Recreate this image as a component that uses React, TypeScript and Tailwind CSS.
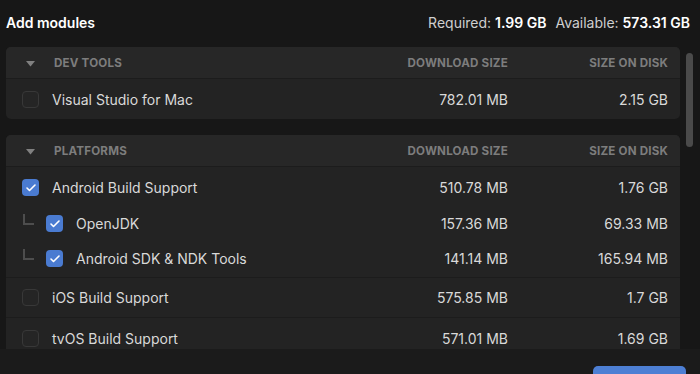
import { Check } from "lucide-react";

type Row = { name: string; dl: string; disk: string; checked?: boolean; child?: boolean; h: string };

const font = { fontFamily: "Inter, 'Noto Sans', sans-serif" };

function Checkbox({ checked }: { checked?: boolean }) {
    if (checked) {
        return (
            <div className="w-[17px] h-[17px] rounded-[4px] bg-[#4a7bd1] flex items-center justify-center shrink-0">
                <Check className="w-[12px] h-[12px] text-white" strokeWidth={3.2} />
            </div>
        );
    }
    return <div className="w-[17px] h-[17px] rounded-[4px] border border-[#383838] bg-[#252525] shrink-0" />;
}

function ModuleRow({ row, className }: { row: Row; className?: string }) {
    return (
        <div className={`flex items-center ${row.h} ${className ?? ""}`}>
            <div className="flex items-center flex-1 pl-[16px]">
                {row.child && (
                    <div className="w-[11px] h-[11px] border-l-2 border-b-2 border-[#4d4d4d] mr-[12px] mb-[8px] ml-[1px]" />
                )}
                <Checkbox checked={row.checked} />
                <span className="ml-[13px] text-[14px] text-[#d9d9d9]">{row.name}</span>
            </div>
            <div className="w-[120px] text-right text-[14px] text-[#d9d9d9]">{row.dl}</div>
            <div className="w-[172px] text-right pr-[12px] text-[14px] text-[#d9d9d9]">{row.disk}</div>
        </div>
    );
}

function PanelHeader({ title }: { title: string }) {
    return (
        <div className="flex items-center h-[32px] pt-[3px] bg-[#272727] border-b border-[#1c1c1c] text-[11.6px] font-bold tracking-[0.2px] text-[#7d7d7d]">
            <div className="flex items-center flex-1 pl-[20px]">
                <svg width="9" height="6" viewBox="0 0 9 6" className="mr-[19px]">
                    <path d="M0 0 H9 L4.5 5.5 Z" fill="#808080" />
                </svg>
                <span>{title}</span>
            </div>
            <div className="w-[120px] text-right">DOWNLOAD SIZE</div>
            <div className="w-[172px] text-right pr-[12px]">SIZE ON DISK</div>
        </div>
    );
}

export default function App() {
    const android: Row[] = [
        { name: "Android Build Support", dl: "510.78 MB", disk: "1.76 GB", checked: true, h: "h-[37px]" },
        { name: "OpenJDK", dl: "157.36 MB", disk: "69.33 MB", checked: true, child: true, h: "h-[35px]" },
        { name: "Android SDK & NDK Tools", dl: "141.14 MB", disk: "165.94 MB", checked: true, child: true, h: "h-[35px]" },
    ];

    return (
        <div className="w-[700px] h-[374px] overflow-hidden bg-[#171717] flex flex-col" style={font}>
            <div className="flex items-center justify-between h-[47px] px-[6px] pb-[3px] shrink-0">
                <h1 className="text-[14px] font-semibold text-white">Add modules</h1>
                <div className="text-[14px] text-[#cfcfcf] pr-[4px]">
                    Required: <span className="font-semibold text-white">1.99 GB</span>
                    <span className="ml-[9px]">Available: </span>
                    <span className="font-semibold text-white">573.31 GB</span>
                </div>
            </div>

            <div className="flex flex-1 min-h-0">
                <div className="w-[674px] ml-[6px] flex flex-col gap-[16px]">
                    <div className="rounded-[5px] overflow-hidden bg-[#232323]">
                        <PanelHeader title="DEV TOOLS" />
                        <ModuleRow row={{ name: "Visual Studio for Mac", dl: "782.01 MB", disk: "2.15 GB", h: "h-[40px]" }} />
                    </div>

                    <div className="rounded-t-[5px] overflow-hidden bg-[#232323] flex-1 min-h-0">
                        <PanelHeader title="PLATFORMS" />
                        <div className="pt-[2px] pb-[1px] border-b border-[#1c1c1c]">
                            {android.map((r) => (
                                <ModuleRow key={r.name} row={r} />
                            ))}
                        </div>
                        <ModuleRow
                            className="border-b border-[#1c1c1c]"
                            row={{ name: "iOS Build Support", dl: "575.85 MB", disk: "1.7 GB", h: "h-[40px]" }}
                        />
                        <ModuleRow row={{ name: "tvOS Build Support", dl: "571.01 MB", disk: "1.69 GB", h: "h-[40px]" }} />
                    </div>
                </div>
                <div className="flex-1 pt-[6px] pl-[6px]">
                    <div className="w-[7px] h-[94px] rounded-full bg-[#4a4a4a]" />
                </div>
            </div>

            <div className="h-[25px] shrink-0 bg-[#1b1b1b] flex justify-end pr-[14px] pt-[17px]">
                <div className="w-[93px] h-[20px] rounded-[5px] bg-[#4d7fd4]" />
            </div>
        </div>
    );
}
